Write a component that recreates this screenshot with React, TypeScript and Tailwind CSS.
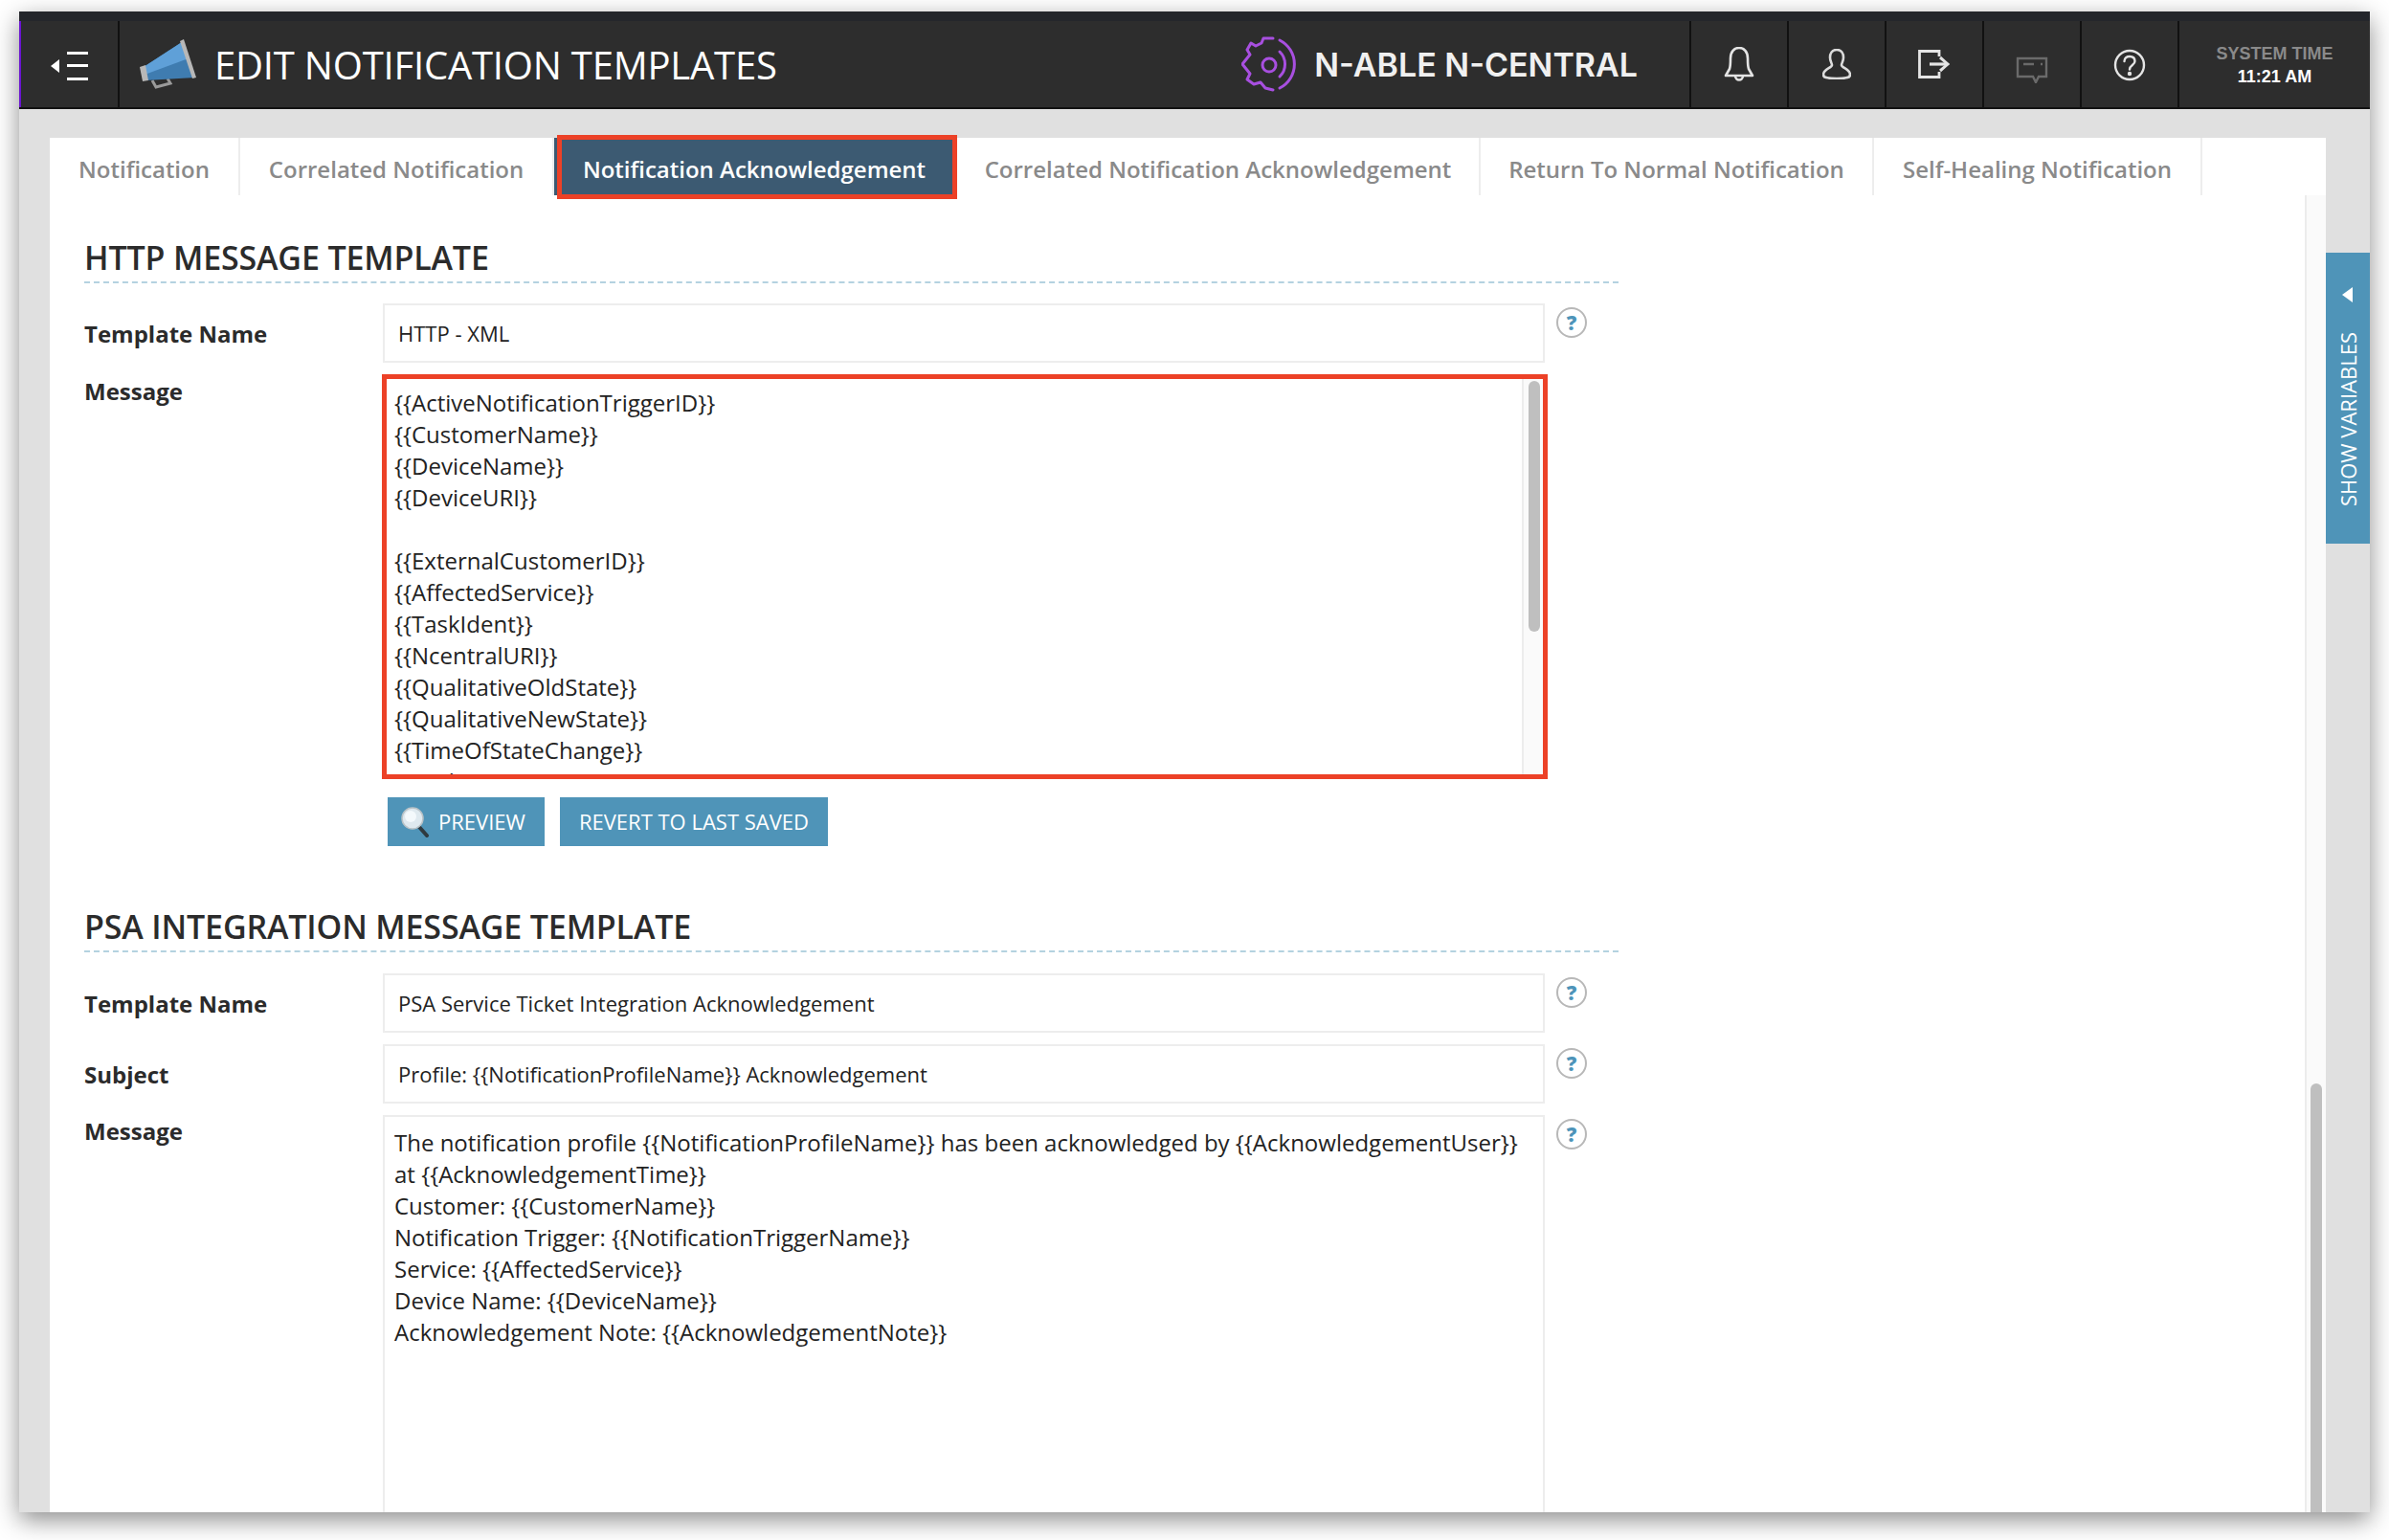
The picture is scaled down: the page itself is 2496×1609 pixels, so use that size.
import { type ReactNode } from 'react'

const FONT = "font-['Open_Sans',sans-serif]"

const TABS = [
  { label: 'Notification', width: 'w-[199px]' },
  { label: 'Correlated Notification', width: 'w-[328px]' },
  { label: 'Notification Acknowledgement', width: 'w-[418px]', active: true },
  { label: 'Correlated Notification Acknowledgement', width: 'w-[547px]' },
  { label: 'Return To Normal Notification', width: 'w-[411px]' },
  { label: 'Self-Healing Notification', width: 'w-[343px]' },
]

const HTTP_LINES = [
  '{{ActiveNotificationTriggerID}}',
  '{{CustomerName}}',
  '{{DeviceName}}',
  '{{DeviceURI}}',
  '',
  '{{ExternalCustomerID}}',
  '{{AffectedService}}',
  '{{TaskIdent}}',
  '{{NcentralURI}}',
  '{{QualitativeOldState}}',
  '{{QualitativeNewState}}',
  '{{TimeOfStateChange}}',
  '{{ProbeURI}}',
]

const PSA_LINES = [
  'The notification profile {{NotificationProfileName}} has been acknowledged by {{AcknowledgementUser}}',
  'at {{AcknowledgementTime}}',
  'Customer: {{CustomerName}}',
  'Notification Trigger: {{NotificationTriggerName}}',
  'Service: {{AffectedService}}',
  'Device Name: {{DeviceName}}',
  'Acknowledgement Note: {{AcknowledgementNote}}',
]

function HelpIcon() {
  return (
    <div className="mt-[4px] ml-[12px] flex h-[32px] w-[32px] shrink-0 items-center justify-center rounded-full border-2 border-[#b8b8b8] bg-white text-[21px] leading-none font-extrabold text-[#4d94b9]">
      ?
    </div>
  )
}

function FieldRow({ label, value }: { label: string; value: string }) {
  return (
    <div className="flex">
      <div className="w-[312px] shrink-0 pt-[16px] text-[24px] leading-[32px] font-bold text-[#2b2b2b]">
        {label}
      </div>
      <div className="flex h-[62px] w-[1214px] shrink-0 items-center border-2 border-[#ededed] px-[14px] text-[22px] text-[#222]">
        {value}
      </div>
      <HelpIcon />
    </div>
  )
}

function SectionHeading({ title }: { title: string }) {
  return (
    <h2 className="w-[1603px] border-b-2 border-dashed border-[#b4d2e0] pb-[1px] text-[34px] leading-[48px] font-semibold tracking-[-0.15px] text-[#2b2b2b]">
      {title}
    </h2>
  )
}

function HeaderCell({ children }: { children: ReactNode }) {
  return (
    <div className="flex h-full w-[102px] shrink-0 items-center justify-center border-l-2 border-[#111]">
      {children}
    </div>
  )
}

export default function App() {
  return (
    <div className={`h-[1609px] w-[2496px] overflow-hidden bg-white pt-[12px] pl-[20px] ${FONT}`}>
      <div className="relative flex h-[1568px] w-[2456px] flex-col overflow-hidden bg-[#e0e0e0] shadow-[0_8px_24px_rgba(0,0,0,0.45)]">
        {/* Top bar */}
        <div className="h-[10px] shrink-0 bg-[#24262b]" />
        <div className="flex h-[92px] shrink-0 items-stretch border-b-2 border-[#111] bg-[#2d2d2d]">
          <div className="flex w-[103px] shrink-0 items-center justify-center border-l-2 border-[#6a14d1]">
            <svg className="mt-[3px]" width="40" height="32" viewBox="0 0 40 32" fill="white">
              <path d="M0 16 L9 9 V23 Z" />
              <rect x="17" y="1" width="22" height="3" />
              <rect x="17" y="14" width="22" height="3" />
              <rect x="17" y="28" width="22" height="3" />
            </svg>
          </div>
          <div className="flex flex-1 items-center border-l-2 border-[#111] pl-[20px]">
            <svg width="60" height="52" viewBox="0 0 60 52">
              <path d="M14 43 L18 50 L33 46 L30 41" fill="none" stroke="#9a9a9a" strokeWidth="3" />
              <path d="M5 29 L45 3 L59 40 L7 43 Z" fill="#3f7cb0" />
              <path d="M5 29 L45 3 L52 20 L6 37 Z" fill="#5fa0d8" />
              <path d="M1 29 L7 27 L10 43 L4 44 Z" fill="#b8b8b8" />
              <path d="M43 2 L47 0 L60 40 L56 41 Z" fill="#b8b8b8" />
            </svg>
            <h1 className="ml-[19px] pt-[2px] text-[40px] leading-none tracking-[-0.2px] text-white">EDIT NOTIFICATION TEMPLATES</h1>
          </div>
          <div className="mr-[54px] flex items-center gap-[18px]">
            <svg width="58" height="58" viewBox="0 0 58 58" fill="none" stroke="#a84fe0" strokeWidth="3" strokeLinecap="round" strokeLinejoin="round">
              <path d="M33 2 L23 2 L21 7 L15 10 L10 7 L6 14 L9 19 L5 24 L1 29 L5 34 L9 39 L6 45 L13 50 L20 48 L25 54 L33 56" />
              <circle cx="29" cy="30" r="7" />
              <path d="M40 16 A18 18 0 0 1 40 42" />
              <path d="M40 4 A28 28 0 0 1 40 54" />
            </svg>
            <span className="pt-[2px] font-['Inter',sans-serif] text-[34px] leading-none font-semibold text-[#f0f0f0]">N-ABLE N-CENTRAL</span>
          </div>
          <HeaderCell>
            <svg width="32" height="37" viewBox="0 0 32 37" fill="none" stroke="#e4e4e4" strokeWidth="2.6" strokeLinejoin="round">
              <path d="M2 30 H30 L26 23 C25 20 25 17 25 12 C25 5 21 1 16 1 C11 1 7 5 7 12 C7 17 7 20 6 23 Z" />
              <path d="M12 30 C12 36 20 36 20 30" />
            </svg>
          </HeaderCell>
          <HeaderCell>
            <svg width="30" height="32" viewBox="0 0 30 32" fill="none" stroke="#dcdcdc" strokeWidth="2.6">
              <path d="M15 1 C10 1 8 5 8 9 C8 13 10 15 10 17 C10 20 1 21 1 27 C1 30 4 31 15 31 C26 31 29 30 29 27 C29 21 20 20 20 17 C20 15 22 13 22 9 C22 5 20 1 15 1 Z" />
            </svg>
          </HeaderCell>
          <HeaderCell>
            <svg width="34" height="30" viewBox="0 0 34 30" fill="none" stroke="#e4e4e4" strokeWidth="2.8">
              <path d="M22 7 V1.500 H1.500 V28.500 H22 V23" />
              <path d="M12 15 H29" strokeWidth="3.2" />
              <path d="M23 8 L31 15 L23 22" strokeWidth="3" />
            </svg>
          </HeaderCell>
          <HeaderCell>
            <svg className="mt-[11px]" width="34" height="28" viewBox="0 0 34 28" fill="none" stroke="#6a6a6a" strokeWidth="2.4">
              <path d="M2 2 H32 V21 H24 L21 27 L18 21 H2 Z" />
              <path d="M8 8 H19 M26 8 H28" />
            </svg>
          </HeaderCell>
          <HeaderCell>
            <svg className="mt-[2px]" width="34" height="34" viewBox="0 0 34 34" fill="none" stroke="#e4e4e4" strokeWidth="2.4">
              <circle cx="17" cy="17" r="15" />
              <path d="M11.500 13 C11.500 9.500 14 8 17 8 C20.500 8 22.500 10 22.500 13 C22.500 17 17 17 17 21.500" strokeLinecap="round" />
              <circle cx="17" cy="26" r="1" fill="#e4e4e4" />
            </svg>
          </HeaderCell>
          <div className="flex w-[201px] shrink-0 flex-col items-center justify-center gap-[4px] border-l-2 border-[#111] pt-[1px] font-['Liberation_Sans',sans-serif] font-bold">
            <span className="text-[18px] leading-[20px] text-[#8a8a8a]">SYSTEM TIME</span>
            <span className="text-[18px] leading-[20px] text-white">11:21 AM</span>
          </div>
        </div>

        {/* Body */}
        <div className="flex min-h-0 flex-1 flex-col pt-[30px] pr-[46px] pl-[32px]">
          <div className="flex h-[60px] shrink-0 bg-white">
            {TABS.map((tab) =>
              tab.active ? (
                <div key={tab.label} className="relative flex items-center border-l-[3px] border-[#3c5a72]">
                  <div className={`-my-[4px] flex h-[67px] items-center justify-center border-[5px] border-[#ec4127] bg-[#3c5a72] pt-[5px] pr-[6px] text-[24px] font-semibold text-white ${tab.width}`}>
                    {tab.label}
                  </div>
                </div>
              ) : (
                <div key={tab.label} className={`flex items-center justify-center border-r-2 border-[#ededed] pt-[5px] text-[24px] font-semibold text-[#8a8a8a] ${tab.width}`}>
                  {tab.label}
                </div>
              ),
            )}
          </div>

          <div className="flex min-h-0 flex-1 bg-white">
            <div className="min-w-0 flex-1 pt-[41px] pl-[36px]">
              <SectionHeading title="HTTP MESSAGE TEMPLATE" />
              <div className="mt-[21px] flex flex-col gap-[12px]">
                <FieldRow label="Template Name" value="HTTP - XML" />
                <div className="flex">
                  <div className="w-[311px] shrink-0 pt-[2px] text-[24px] leading-[32px] font-bold text-[#2b2b2b]">Message</div>
                  <div className="flex h-[423px] w-[1218px] shrink-0 overflow-hidden border-[5px] border-[#ec4127]">
                    <div className="h-full min-w-0 flex-1 overflow-hidden pt-[8px] pl-[8px] text-[24px] leading-[33px] text-[#222]">
                      {HTTP_LINES.map((line, i) => (
                        <div key={i} className="h-[33px] whitespace-pre">{line}</div>
                      ))}
                    </div>
                    <div className="h-full w-[22px] shrink-0 border-l-2 border-[#ececec] bg-[#fafafa] pt-[2px] pl-[5px]">
                      <div className="h-[262px] w-[12px] rounded-full bg-[#bfbfbf]" />
                    </div>
                  </div>
                </div>
              </div>
              <div className="mt-[19px] ml-[317px] flex gap-[16px] text-[22px] text-white">
                <div className="flex h-[51px] w-[164px] items-center gap-[9px] bg-[#4f94b8] pl-[14px]">
                  <svg width="30" height="32" viewBox="0 0 30 32">
                    <path d="M19 21 L27 30" stroke="#2f3a40" strokeWidth="4" strokeLinecap="round" />
                    <circle cx="12" cy="12" r="11" fill="#dfe9ef" stroke="#b9c2c6" strokeWidth="1.500" />
                    <circle cx="10" cy="10" r="6" fill="#f4f9fc" />
                  </svg>
                  <span>PREVIEW</span>
                </div>
                <div className="flex h-[51px] w-[280px] items-center justify-center bg-[#4f94b8]">REVERT TO LAST SAVED</div>
              </div>

              <div className="mt-[60px]">
                <SectionHeading title="PSA INTEGRATION MESSAGE TEMPLATE" />
              </div>
              <div className="mt-[22px] flex flex-col gap-[12px]">
                <FieldRow label="Template Name" value="PSA Service Ticket Integration Acknowledgement" />
                <FieldRow label="Subject" value="Profile: {{NotificationProfileName}} Acknowledgement" />
                <div className="flex">
                  <div className="w-[312px] shrink-0 pt-[1px] text-[24px] leading-[32px] font-bold text-[#2b2b2b]">Message</div>
                  <div className="h-[520px] w-[1214px] shrink-0 border-2 border-[#ededed] pt-[10px] pl-[10px] text-[24px] leading-[33px] text-[#222]">
                    {PSA_LINES.map((line) => (
                      <div key={line}>{line}</div>
                    ))}
                  </div>
                  <HelpIcon />
                </div>
              </div>
            </div>
            {/* Page scrollbar */}
            <div className="flex w-[22px] shrink-0 flex-col items-center justify-end border-l-2 border-[#ececec] bg-[#fafafa]">
              <div className="h-[448px] w-[12px] rounded-t-full bg-[#bfbfbf]" />
            </div>
          </div>
        </div>

        {/* Show variables flap */}
        <div className="absolute top-[252px] right-0 flex h-[304px] w-[46px] flex-col items-center bg-[#4f94b8] text-white">
          <svg className="mt-[36px]" width="12" height="16" viewBox="0 0 12 16" fill="white">
            <path d="M0 8 L11 0 V16 Z" />
          </svg>
          <span className="mt-[31px] rotate-180 text-[22px] leading-none whitespace-nowrap [writing-mode:vertical-rl]">SHOW VARIABLES</span>
        </div>
      </div>
    </div>
  )
}
